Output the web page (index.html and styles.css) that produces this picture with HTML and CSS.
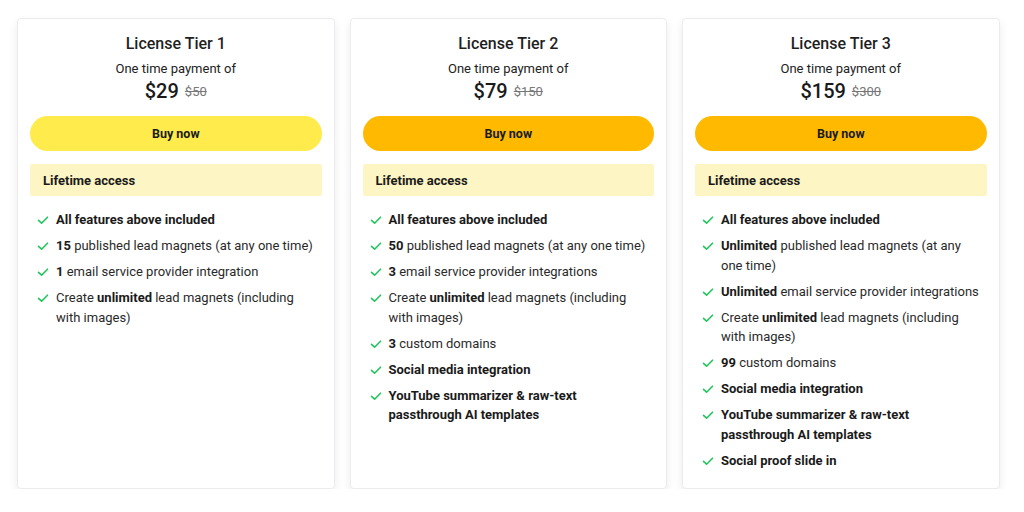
FILE: index.html
```html
<!DOCTYPE html>
<html>
<head>
<meta charset="utf-8">
<link rel="stylesheet" href="styles.css">
</head>
<body>
<div class="tiers">
  <div class="card">
    <h2 class="title">License Tier 1</h2>
    <p class="sub">One time payment of</p>
    <div class="price"><span class="now">$29</span><s class="was">$50</s></div>
    <button class="buy buy-light">Buy now</button>
    <div class="access">Lifetime access</div>
    <ul class="features">
      <li><svg class="chk" viewBox="0 0 12 12"><path d="M1.5 6.3 L4.6 9.2 L10.5 3.2"/></svg><span><b>All features above included</b></span></li>
      <li><svg class="chk" viewBox="0 0 12 12"><path d="M1.5 6.3 L4.6 9.2 L10.5 3.2"/></svg><span><b>15</b> published lead magnets (at any one time)</span></li>
      <li><svg class="chk" viewBox="0 0 12 12"><path d="M1.5 6.3 L4.6 9.2 L10.5 3.2"/></svg><span><b>1</b> email service provider integration</span></li>
      <li><svg class="chk" viewBox="0 0 12 12"><path d="M1.5 6.3 L4.6 9.2 L10.5 3.2"/></svg><span>Create <b>unlimited</b> lead magnets (including with images)</span></li>
    </ul>
  </div>
  <div class="card">
    <h2 class="title">License Tier 2</h2>
    <p class="sub">One time payment of</p>
    <div class="price"><span class="now">$79</span><s class="was">$150</s></div>
    <button class="buy">Buy now</button>
    <div class="access">Lifetime access</div>
    <ul class="features">
      <li><svg class="chk" viewBox="0 0 12 12"><path d="M1.5 6.3 L4.6 9.2 L10.5 3.2"/></svg><span><b>All features above included</b></span></li>
      <li><svg class="chk" viewBox="0 0 12 12"><path d="M1.5 6.3 L4.6 9.2 L10.5 3.2"/></svg><span><b>50</b> published lead magnets (at any one time)</span></li>
      <li><svg class="chk" viewBox="0 0 12 12"><path d="M1.5 6.3 L4.6 9.2 L10.5 3.2"/></svg><span><b>3</b> email service provider integrations</span></li>
      <li><svg class="chk" viewBox="0 0 12 12"><path d="M1.5 6.3 L4.6 9.2 L10.5 3.2"/></svg><span>Create <b>unlimited</b> lead magnets (including with images)</span></li>
      <li><svg class="chk" viewBox="0 0 12 12"><path d="M1.5 6.3 L4.6 9.2 L10.5 3.2"/></svg><span><b>3</b> custom domains</span></li>
      <li><svg class="chk" viewBox="0 0 12 12"><path d="M1.5 6.3 L4.6 9.2 L10.5 3.2"/></svg><span><b>Social media integration</b></span></li>
      <li><svg class="chk" viewBox="0 0 12 12"><path d="M1.5 6.3 L4.6 9.2 L10.5 3.2"/></svg><span><b>YouTube summarizer &amp; raw-text passthrough AI templates</b></span></li>
    </ul>
  </div>
  <div class="card">
    <h2 class="title">License Tier 3</h2>
    <p class="sub">One time payment of</p>
    <div class="price"><span class="now">$159</span><s class="was">$300</s></div>
    <button class="buy">Buy now</button>
    <div class="access">Lifetime access</div>
    <ul class="features">
      <li><svg class="chk" viewBox="0 0 12 12"><path d="M1.5 6.3 L4.6 9.2 L10.5 3.2"/></svg><span><b>All features above included</b></span></li>
      <li><svg class="chk" viewBox="0 0 12 12"><path d="M1.5 6.3 L4.6 9.2 L10.5 3.2"/></svg><span><b>Unlimited</b> published lead magnets (at any one time)</span></li>
      <li><svg class="chk" viewBox="0 0 12 12"><path d="M1.5 6.3 L4.6 9.2 L10.5 3.2"/></svg><span><b>Unlimited</b> email service provider integrations</span></li>
      <li><svg class="chk" viewBox="0 0 12 12"><path d="M1.5 6.3 L4.6 9.2 L10.5 3.2"/></svg><span>Create <b>unlimited</b> lead magnets (including with images)</span></li>
      <li><svg class="chk" viewBox="0 0 12 12"><path d="M1.5 6.3 L4.6 9.2 L10.5 3.2"/></svg><span><b>99</b> custom domains</span></li>
      <li><svg class="chk" viewBox="0 0 12 12"><path d="M1.5 6.3 L4.6 9.2 L10.5 3.2"/></svg><span><b>Social media integration</b></span></li>
      <li><svg class="chk" viewBox="0 0 12 12"><path d="M1.5 6.3 L4.6 9.2 L10.5 3.2"/></svg><span><b>YouTube summarizer &amp; raw-text passthrough AI templates</b></span></li>
      <li><svg class="chk" viewBox="0 0 12 12"><path d="M1.5 6.3 L4.6 9.2 L10.5 3.2"/></svg><span><b>Social proof slide in</b></span></li>
    </ul>
  </div>
</div>
</body>
</html>
```

FILE: styles.css
```css
html, body {
  margin: 0;
  padding: 0;
  background: #ffffff;
}
body {
  font-family: Roboto, "Liberation Sans", Arial, sans-serif;
  color: #1d1d1f;
}
.tiers {
  display: flex;
  gap: 15px;
  padding: 18px 0 0 17px;
  align-items: stretch;
}
.card {
  width: 317.5px;
  box-sizing: border-box;
  background: #fff;
  border-radius: 4px;
  border: 1px solid #ececee;
  box-shadow: 0 4px 10px rgba(0, 0, 0, 0.08);
  padding: 13px 12px 18px 12px;
  display: flex;
  flex-direction: column;
}
.title {
  margin: 0;
  text-align: center;
  font-size: 16px;
  line-height: 24px;
  font-weight: 500;
  color: #1f1f1f;
}
.sub {
  margin: 3px 0 0;
  text-align: center;
  font-size: 13px;
  line-height: 20px;
  color: #222;
}
.price {
  display: flex;
  justify-content: center;
  align-items: center;
  gap: 6px;
  height: 24px;
}
.now {
  font-size: 20px;
  line-height: 24px;
  font-weight: 500;
  color: #1a1a1a;
}
.was {
  font-size: 13px;
  line-height: 16px;
  margin-top: 1px;
  color: #777;
}
.buy {
  margin-top: 13px;
  height: 35px;
  border: 0;
  border-radius: 18px;
  background: #ffba00;
  font-family: inherit;
  font-size: 12.5px;
  font-weight: 700;
  color: #1a1a1a;
  padding: 0;
}
.buy-light {
  background: #ffeb4b;
}
.access {
  margin-top: 13px;
  height: 32px;
  border-radius: 2px;
  background: #fef5c4;
  padding: 0 13px;
  display: flex;
  align-items: center;
  font-size: 13px;
  font-weight: 700;
  color: #1a1a1a;
}
.features {
  list-style: none;
  margin: 14px 0 0;
  padding: 0 5px 0 7px;
  display: flex;
  flex-direction: column;
  gap: 6.5px;
}
.features li {
  display: flex;
  align-items: flex-start;
  gap: 7px;
  font-size: 13px;
  line-height: 19.5px;
  color: #2a2a2a;
}
.features b {
  font-weight: 700;
  color: #1a1a1a;
}
.chk {
  flex: none;
  width: 12px;
  height: 12px;
  margin-top: 4px;
  fill: none;
  stroke: #22c55e;
  stroke-width: 1.6;
  stroke-linecap: round;
  stroke-linejoin: round;
}
```
